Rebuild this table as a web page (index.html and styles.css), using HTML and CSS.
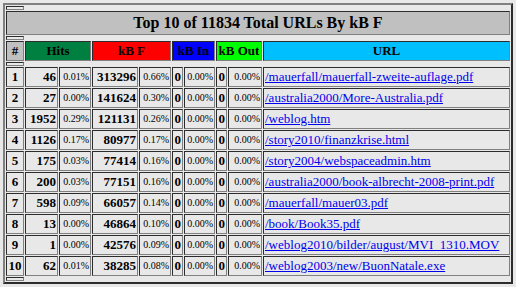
FILE: index.html
```html
<!DOCTYPE html>
<html>
<head>
<meta charset="utf-8">
<title>Top URLs</title>
<link rel="stylesheet" href="styles.css">
</head>
<body>
<table class="stats">
  <colgroup>
    <col class="c-rank"><col class="c-num1"><col class="c-pct1"><col class="c-num2"><col class="c-pct2"><col class="c-num3"><col class="c-pct3"><col class="c-num4"><col class="c-pct4"><col class="c-url">
  </colgroup>
  <tr class="gap"><td></td></tr>
  <tr><th class="title" colspan="10">Top 10 of 11834 Total URLs By kB F</th></tr>
  <tr class="gap"><td></td></tr>
  <tr class="head">
    <th class="h-rank">#</th>
    <th class="h-hits" colspan="2">Hits</th>
    <th class="h-kbf" colspan="2">kB F</th>
    <th class="h-kbin" colspan="2">kB In</th>
    <th class="h-kbout" colspan="2">kB Out</th>
    <th class="h-url">URL</th>
  </tr>
  <tr class="gap"><td></td></tr>
  <tr class="row"><td class="rank">1</td><td class="num">46</td><td class="pct">0.01%</td><td class="num">313296</td><td class="pct">0.66%</td><td class="num">0</td><td class="pct">0.00%</td><td class="num">0</td><td class="pct">0.00%</td><td class="url"><a href="#">/mauerfall/mauerfall-zweite-auflage.pdf</a></td></tr>
  <tr class="row"><td class="rank">2</td><td class="num">27</td><td class="pct">0.00%</td><td class="num">141624</td><td class="pct">0.30%</td><td class="num">0</td><td class="pct">0.00%</td><td class="num">0</td><td class="pct">0.00%</td><td class="url"><a href="#">/australia2000/More-Australia.pdf</a></td></tr>
  <tr class="row"><td class="rank">3</td><td class="num">1952</td><td class="pct">0.29%</td><td class="num">121131</td><td class="pct">0.26%</td><td class="num">0</td><td class="pct">0.00%</td><td class="num">0</td><td class="pct">0.00%</td><td class="url"><a href="#">/weblog.htm</a></td></tr>
  <tr class="row"><td class="rank">4</td><td class="num">1126</td><td class="pct">0.17%</td><td class="num">80977</td><td class="pct">0.17%</td><td class="num">0</td><td class="pct">0.00%</td><td class="num">0</td><td class="pct">0.00%</td><td class="url"><a href="#">/story2010/finanzkrise.html</a></td></tr>
  <tr class="row"><td class="rank">5</td><td class="num">175</td><td class="pct">0.03%</td><td class="num">77414</td><td class="pct">0.16%</td><td class="num">0</td><td class="pct">0.00%</td><td class="num">0</td><td class="pct">0.00%</td><td class="url"><a href="#">/story2004/webspaceadmin.htm</a></td></tr>
  <tr class="row"><td class="rank">6</td><td class="num">200</td><td class="pct">0.03%</td><td class="num">77151</td><td class="pct">0.16%</td><td class="num">0</td><td class="pct">0.00%</td><td class="num">0</td><td class="pct">0.00%</td><td class="url"><a href="#">/australia2000/book-albrecht-2008-print.pdf</a></td></tr>
  <tr class="row"><td class="rank">7</td><td class="num">598</td><td class="pct">0.09%</td><td class="num">66057</td><td class="pct">0.14%</td><td class="num">0</td><td class="pct">0.00%</td><td class="num">0</td><td class="pct">0.00%</td><td class="url"><a href="#">/mauerfall/mauer03.pdf</a></td></tr>
  <tr class="row"><td class="rank">8</td><td class="num">13</td><td class="pct">0.00%</td><td class="num">46864</td><td class="pct">0.10%</td><td class="num">0</td><td class="pct">0.00%</td><td class="num">0</td><td class="pct">0.00%</td><td class="url"><a href="#">/book/Book35.pdf</a></td></tr>
  <tr class="row"><td class="rank">9</td><td class="num">1</td><td class="pct">0.00%</td><td class="num">42576</td><td class="pct">0.09%</td><td class="num">0</td><td class="pct">0.00%</td><td class="num">0</td><td class="pct">0.00%</td><td class="url"><a href="#">/weblog2010/bilder/august/MVI_1310.MOV</a></td></tr>
  <tr class="row"><td class="rank">10</td><td class="num">62</td><td class="pct">0.01%</td><td class="num">38285</td><td class="pct">0.08%</td><td class="num">0</td><td class="pct">0.00%</td><td class="num">0</td><td class="pct">0.00%</td><td class="url"><a href="#">/weblog2003/new/BuonNatale.exe</a></td></tr>
  <tr class="gap"><td></td></tr>
</table>
</body>
</html>
```

FILE: styles.css
```css
html, body {
  background: #e8e8e8;
}
body {
  margin: 3px;
  font-family: "Liberation Serif", "Times New Roman", serif;
  color: #000;
}
.stats {
  width: 510px;
  table-layout: fixed;
  border-collapse: separate;
  border-spacing: 1px;
  border: 2px outset #808080;
}
.stats td, .stats th {
  border: 1px inset #808080;
  padding: 1px;
  overflow: hidden;
  white-space: nowrap;
}
.c-rank { width: 18px; }
.c-num1 { width: 33px; }
.c-pct1 { width: 32px; }
.c-num2 { width: 46px; }
.c-pct2 { width: 32px; }
.c-num3 { width: 11px; }
.c-pct3 { width: 31px; }
.c-num4 { width: 11px; }
.c-pct4 { width: 34px; }
.c-url { width: 247px; }

.gap td {
  height: 0;
  padding: 1px;
}
.title {
  background: #c0c0c0;
  font-size: 16px;
  line-height: 20px;
  font-weight: bold;
  text-align: center;
}
.head th {
  font-size: 13px;
  line-height: 16px;
  font-weight: bold;
  text-align: center;
}
.h-rank { background: #c0c0c0; }
.h-hits { background: #008040; }
.h-kbf { background: #ff0000; }
.h-kbin { background: #0000ff; }
.h-kbout { background: #00ff00; }
.h-url { background: #00bfff; }

.row td {
  line-height: 16px;
}
.rank {
  font-size: 13px;
  font-weight: bold;
  text-align: center;
}
.num {
  font-size: 13px;
  font-weight: bold;
  text-align: right;
}
.pct {
  font-size: 10px;
  text-align: right;
}
.url {
  font-size: 13px;
  text-align: left;
}
.url a {
  color: #0000ee;
  text-decoration: underline;
}
```
